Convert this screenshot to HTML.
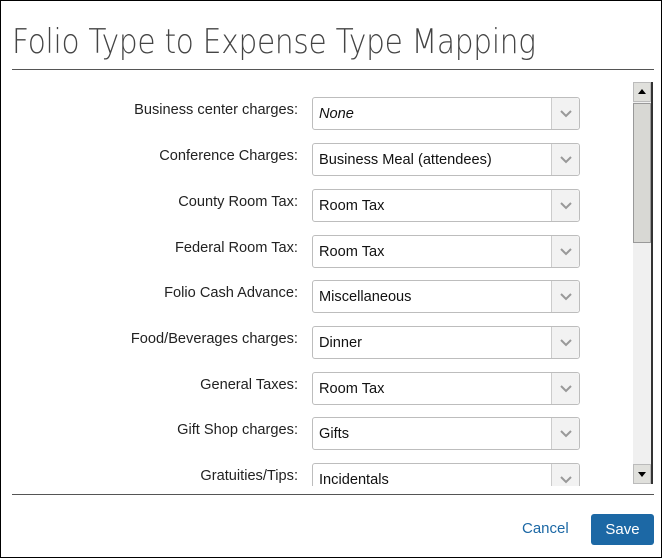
<!DOCTYPE html>
<html><head><style>
*{margin:0;padding:0;box-sizing:border-box}
body{width:662px;height:558px;background:#fff;position:relative;overflow:hidden;font-family:"Liberation Sans",Arial,sans-serif}
.frame{position:absolute;left:0;top:0;width:662px;height:558px;border:1px solid #000}
h1{position:absolute;left:12px;top:22px;font-size:34px;color:#444;letter-spacing:-0.3px;font-family:"DejaVu Sans","Liberation Sans",sans-serif;font-weight:200;transform:scaleX(0.87);transform-origin:left;white-space:nowrap}
.hr{position:absolute;left:12px;width:642px;height:1px;background:#555}
.content{position:absolute;left:12px;top:72px;width:621px;height:414px;overflow:hidden}
.row{position:absolute;left:0;width:621px;height:33px}
.lbl{position:absolute;right:335px;top:5px;font-size:14.6px;color:#222;white-space:nowrap}
.sel{position:absolute;left:300px;top:0;width:268px;height:33px;border:1px solid #bdbdbd;border-radius:3px;background:#fff}
.sel span{position:absolute;left:6px;top:8px;font-size:14.6px;color:#111}
.sel .b{position:absolute;right:0;top:0;width:28px;height:31px;border-left:1px solid #ccc;background:#f2f2f2;border-radius:0 3px 3px 0}
.sel .b svg{position:absolute;left:8px;top:12px}
.sb{position:absolute;left:633px;top:82px;width:20px;height:402px;background:#f0f0f0;border-right:2px solid #333}
.sb .u,.sb .d{position:absolute;left:0;width:18px;height:20px;background:#e0e0dc;border:1px solid #bbb}
.sb .th{position:absolute;left:0;top:21px;width:18px;height:140px;background:#d8d8d4;border:1px solid #999}
.save{position:absolute;left:591px;top:514px;width:63px;height:31px;background:#1c68a5;border-radius:3px;color:#fff;font-size:15px;text-align:center;line-height:31px}
.cancel{position:absolute;left:522px;top:520px;color:#1c68a5;font-size:15px}
</style></head><body>
<div class="frame"></div>
<h1>Folio Type to Expense Type Mapping</h1>
<div class="hr" style="top:69px"></div>
<div class="content">
<div class="row" style="top:25px"><div class="lbl">Business center charges:</div><div class="sel"><span style="font-style:italic">None</span><div class="b"><svg width="12" height="8"><path d="M1 1 L6 6 L11 1" stroke="#999" stroke-width="2" fill="none"/></svg></div></div></div>
<div class="row" style="top:71px"><div class="lbl">Conference Charges:</div><div class="sel"><span>Business Meal (attendees)</span><div class="b"><svg width="12" height="8"><path d="M1 1 L6 6 L11 1" stroke="#999" stroke-width="2" fill="none"/></svg></div></div></div>
<div class="row" style="top:117px"><div class="lbl">County Room Tax:</div><div class="sel"><span>Room Tax</span><div class="b"><svg width="12" height="8"><path d="M1 1 L6 6 L11 1" stroke="#999" stroke-width="2" fill="none"/></svg></div></div></div>
<div class="row" style="top:163px"><div class="lbl">Federal Room Tax:</div><div class="sel"><span>Room Tax</span><div class="b"><svg width="12" height="8"><path d="M1 1 L6 6 L11 1" stroke="#999" stroke-width="2" fill="none"/></svg></div></div></div>
<div class="row" style="top:208px"><div class="lbl">Folio Cash Advance:</div><div class="sel"><span>Miscellaneous</span><div class="b"><svg width="12" height="8"><path d="M1 1 L6 6 L11 1" stroke="#999" stroke-width="2" fill="none"/></svg></div></div></div>
<div class="row" style="top:254px"><div class="lbl">Food/Beverages charges:</div><div class="sel"><span>Dinner</span><div class="b"><svg width="12" height="8"><path d="M1 1 L6 6 L11 1" stroke="#999" stroke-width="2" fill="none"/></svg></div></div></div>
<div class="row" style="top:300px"><div class="lbl">General Taxes:</div><div class="sel"><span>Room Tax</span><div class="b"><svg width="12" height="8"><path d="M1 1 L6 6 L11 1" stroke="#999" stroke-width="2" fill="none"/></svg></div></div></div>
<div class="row" style="top:345px"><div class="lbl">Gift Shop charges:</div><div class="sel"><span>Gifts</span><div class="b"><svg width="12" height="8"><path d="M1 1 L6 6 L11 1" stroke="#999" stroke-width="2" fill="none"/></svg></div></div></div>
<div class="row" style="top:391px"><div class="lbl">Gratuities/Tips:</div><div class="sel"><span>Incidentals</span><div class="b"><svg width="12" height="8"><path d="M1 1 L6 6 L11 1" stroke="#999" stroke-width="2" fill="none"/></svg></div></div></div>
</div>
<div class="sb"><div class="u" style="top:0"><svg width="16" height="18"><path d="M4 11 L8 6 L12 11Z" fill="#000"/></svg></div><div class="th"></div><div class="d" style="top:382px"><svg width="16" height="18"><path d="M4 7 L8 12 L12 7Z" fill="#000"/></svg></div></div>
<div class="hr" style="top:494px"></div>
<div class="cancel">Cancel</div>
<div class="save">Save</div>
</body></html>
